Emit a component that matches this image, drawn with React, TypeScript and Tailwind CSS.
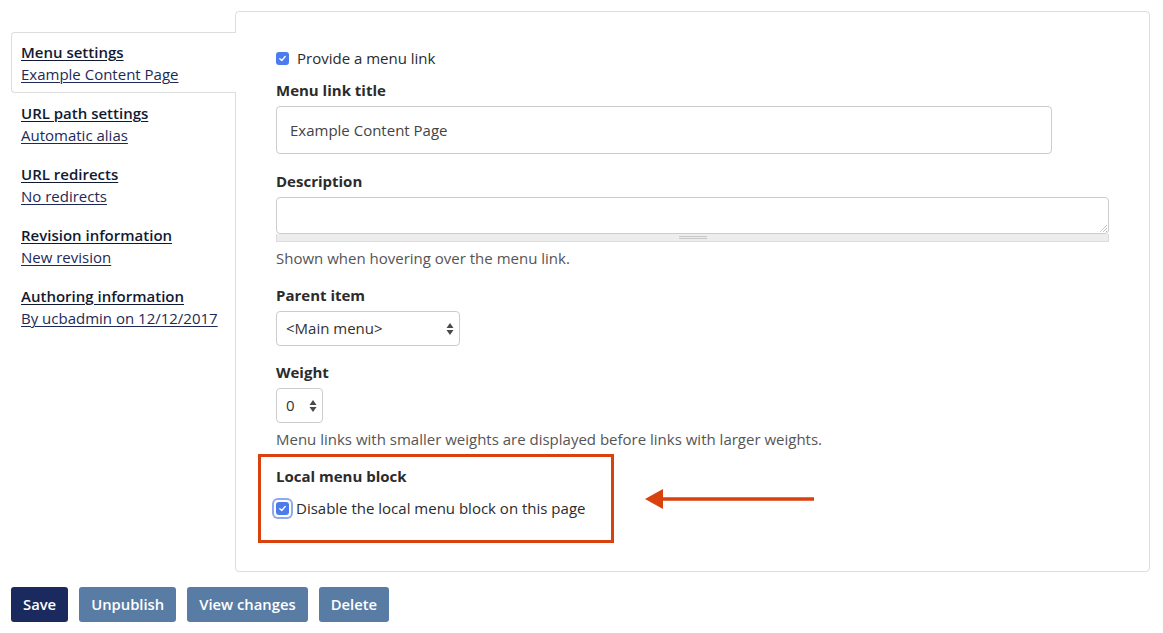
type Tab = {
  title: string;
  summary: string;
  active?: boolean;
};

const tabs: Tab[] = [
  { title: "Menu settings", summary: "Example Content Page", active: true },
  { title: "URL path settings", summary: "Automatic alias" },
  { title: "URL redirects", summary: "No redirects" },
  { title: "Revision information", summary: "New revision" },
  { title: "Authoring information", summary: "By ucbadmin on 12/12/2017" },
];

function Check() {
  return (
    <span className="flex h-[13px] w-[13px] items-center justify-center rounded-[3px] bg-[#4b7bec]">
      <svg viewBox="0 0 10 10" className="h-[9px] w-[9px]">
        <path d="M2 5.2 L4.2 7.2 L8 2.8" fill="none" stroke="white" strokeWidth="1.5" strokeLinecap="round" strokeLinejoin="round" />
      </svg>
    </span>
  );
}

// up/down arrows of a native select / number field
function Spinner() {
  return (
    <svg viewBox="0 0 8 14" className="h-[14px] w-[8px]">
      <path d="M4 1 L7.5 6 L0.5 6 Z M4 13 L7.5 8 L0.5 8 Z" fill="#4a4a4a" />
    </svg>
  );
}

export default function App() {
  return (
    <div className="relative h-[633px] w-[1163px] bg-white font-['Open_Sans',sans-serif] text-[15px] text-[#2b2b2b]">
      <div className="flex pl-[11px] pt-[11px]">
        <div className="w-[224px] shrink-0 pt-[21px]">
          {tabs.map((t) => (
            <div
              key={t.title}
              className={
                t.active
                  ? "relative z-10 -mr-px h-[61px] rounded-l-[4px] border border-r-0 border-[#dddddd] bg-white pl-[9px] pt-[8px] leading-[22px]"
                  : "h-[61px] pl-[10px] pt-[9px] leading-[22px]"
              }
            >
              <div className="font-semibold text-[#111a33] underline decoration-1 underline-offset-2">{t.title}</div>
              <div className="text-[#1d2a57] underline decoration-1 underline-offset-2">{t.summary}</div>
            </div>
          ))}
        </div>
        <div className="h-[561px] w-[915px] rounded-[4px] border border-[#dddddd] pl-[40px] pt-[35px]">
          <label className="flex items-center gap-[8px] leading-[22px]">
            <Check />
            <span>Provide a menu link</span>
          </label>

          <div className="mt-[10px] font-bold leading-[22px]">Menu link title</div>
          <div className="mt-[5px] flex h-[48px] w-[776px] items-center rounded-[4px] border border-[#cccccc] px-[13px] text-[#444]">
            Example Content Page
          </div>

          <div className="mt-[16px] font-bold leading-[22px]">Description</div>
          <div className="mt-[5px] w-[833px]">
            <div className="relative h-[37px] rounded-[4px] border border-[#cccccc] bg-white">
              <svg viewBox="0 0 8 8" className="absolute bottom-[1px] right-[1px] h-[8px] w-[8px]">
                <path d="M8 1 L1 8 M8 4 L4 8 M8 7 L7 8" stroke="#888" strokeWidth="0.8" strokeDasharray="1 0.6" />
              </svg>
            </div>
            <div className="flex h-[8px] items-center justify-center border border-t-0 border-[#dcdcdc] bg-[#ededed]">
              <div className="h-[3px] w-[28px] border-y border-[#c8c8c8]" />
            </div>
          </div>
          <div className="mt-[5px] leading-[22px] text-[#555555]">Shown when hovering over the menu link.</div>

          <div className="mt-[15px] font-bold leading-[22px]">Parent item</div>
          <div className="mt-[5px] flex h-[35px] w-[184px] items-center justify-between rounded-[4px] border border-[#cccccc] pl-[9px] pr-[5px] text-[#333]">
            <span>&lt;Main menu&gt;</span>
            <Spinner />
          </div>

          <div className="mt-[15px] font-bold leading-[22px]">Weight</div>
          <div className="mt-[5px] flex h-[35px] w-[47px] items-center justify-between rounded-[4px] border border-[#cccccc] pl-[9px] pr-[5px] text-[#333]">
            <span>0</span>
            <Spinner />
          </div>
          <div className="mt-[5px] leading-[22px] text-[#555555]">
            Menu links with smaller weights are displayed before links with larger weights.
          </div>

          <div className="-ml-[18px] mt-[4px] h-[89px] w-[356px] border-[3px] border-[#d9410f] pl-[15px] pt-[8px]">
            <div className="font-bold leading-[22px]">Local menu block</div>
            <label className="mt-[10px] flex items-center gap-[9px] leading-[22px]">
              <span className="-ml-[2px] rounded-[4px] p-[2px] ring-2 ring-[#8ea8f4]">
                <Check />
              </span>
              <span className="-ml-[4px]">Disable the local menu block on this page</span>
            </label>
          </div>
        </div>
      </div>

      <svg className="absolute left-[640px] top-[486px]" width="180" height="26" viewBox="0 0 180 26">
        <path d="M5 13 L23 3 L23 23 Z" fill="#d9410f" />
        <line x1="20" y1="13" x2="174" y2="13" stroke="#d9410f" strokeWidth="3.5" />
      </svg>

      <div className="flex gap-[11px] pl-[11px] pt-[15px]">
        {["Save", "Unpublish", "View changes", "Delete"].map((b, i) => (
          <button
            key={b}
            className={
              (i === 0 ? "bg-[#1b2a5e] " : "bg-[#587ca3] ") +
              "h-[35px] rounded-[3px] px-[12px] text-[14.8px] font-semibold text-white"
            }
          >
            {b}
          </button>
        ))}
      </div>
    </div>
  );
}
